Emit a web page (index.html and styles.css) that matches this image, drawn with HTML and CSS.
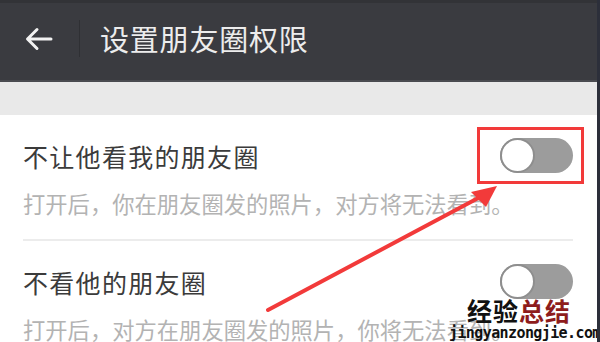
FILE: index.html
```html
<!DOCTYPE html>
<html lang="zh-CN">
<head>
<meta charset="utf-8">
<link rel="stylesheet" href="styles.css">
</head>
<body>
<div class="screen">
  <header class="topbar">
    <svg class="back" width="28" height="24" viewBox="0 0 28 24">
      <path d="M26 12H3M12 2.5L2.5 12L12 21.5" fill="none" stroke="#f2f2f2" stroke-width="3" stroke-linecap="round" stroke-linejoin="round"/>
    </svg>
    <span class="sep"></span>
    <h1 class="title">设置朋友圈权限</h1>
  </header>
  <div class="band"></div>
  <ul class="list">
    <li class="row">
      <div class="row-head">
        <span class="row-title">不让他看我的朋友圈</span>
        <span class="toggle toggle-marked"><span class="knob"></span></span>
      </div>
      <p class="row-desc">打开后，你在朋友圈发的照片，对方将无法看到。</p>
    </li>
    <li class="row">
      <div class="row-head">
        <span class="row-title">不看他的朋友圈</span>
        <span class="toggle"><span class="knob"></span></span>
      </div>
      <p class="row-desc">打开后，对方在朋友圈发的照片，你将无法看到。</p>
    </li>
  </ul>
  <svg class="arrow" width="600" height="342" viewBox="0 0 600 342">
    <line x1="268" y1="310" x2="482" y2="196" stroke="#f23a3a" stroke-width="4" stroke-linecap="round"/>
    <polygon points="497,186 471,192 486,207" fill="#f23a3a"/>
  </svg>
  <div class="watermark">
    <div class="wm-cn"><span class="wm-dark">经验</span><span class="wm-red">总结</span></div>
    <div class="wm-url">jingyanzongjie.com</div>
  </div>
</div>
</body>
</html>
```

FILE: styles.css
```css
* { box-sizing: border-box; margin: 0; padding: 0; }
html, body { width: 600px; height: 342px; overflow: hidden; }
body {
  font-family: "Noto Sans CJK SC", "Noto Sans", sans-serif;
  background: #ffffff;
}
.screen {
  position: relative;
  width: 600px;
  height: 342px;
  border-right: 3px solid #2c2f3a;
  overflow: hidden;
  display: flex;
  flex-direction: column;
}
.topbar {
  height: 82px;
  flex: none;
  background: #3a3b40;
  border-top: 3px solid #323337;
  border-bottom: 2px solid #4a4b50;
  display: flex;
  align-items: center;
  padding-left: 25px;
}
.back { flex: none; margin-top: -6px; }
.sep {
  width: 1px;
  height: 37px;
  background: #2f3034;
  margin-left: 26px;
  margin-right: 20px;
  margin-top: -6px;
}
.title {
  font-size: 29px;
  font-weight: 400;
  color: #ececec;
  letter-spacing: 0.8px;
  margin-top: -8px;
}
.band {
  height: 33px;
  flex: none;
  background: #e9e9e9;
}
.list {
  list-style: none;
  padding: 0 24px 0 23px;
}
.row {
  padding-top: 20px;
  height: 126px;
  border-bottom: 2px solid #ececec;
}
.row-head {
  display: flex;
  align-items: center;
  justify-content: space-between;
  height: 42px;
}
.row-title {
  font-size: 25px;
  color: #3b3b3b;
  letter-spacing: 1.3px;
}
.row-desc {
  margin-top: 11px;
  font-size: 22.3px;
  line-height: 30px;
  color: #b3b3b3;
  white-space: nowrap;
}
.toggle {
  position: relative;
  width: 73px;
  height: 35px;
  border-radius: 18px;
  background: #9c9c9c;
  margin-top: -2px;
}
.knob {
  position: absolute;
  left: 0;
  top: 0;
  width: 35px;
  height: 35px;
  border-radius: 50%;
  background: #ffffff;
  border: 2px solid #8e8e8e;
}
.toggle-marked::after {
  content: "";
  position: absolute;
  left: -23px;
  top: -11px;
  width: 101px;
  height: 51px;
  border: 3px solid #f23a3a;
}
.arrow {
  position: absolute;
  left: 0;
  top: 0;
  pointer-events: none;
}
.watermark {
  position: absolute;
  left: 449px;
  top: 296px;
  width: 140px;
  text-align: center;
}
.wm-cn {
  font-size: 25px;
  font-weight: 700;
  line-height: 28px;
  letter-spacing: 1px;
}
.wm-dark { color: #111111; }
.wm-red { color: #8e1c1c; }
.wm-url {
  font-family: "DejaVu Sans Mono", monospace;
  font-size: 15px;
  font-weight: 700;
  line-height: 18px;
  color: #111111;
  letter-spacing: -0.6px;
}
```
